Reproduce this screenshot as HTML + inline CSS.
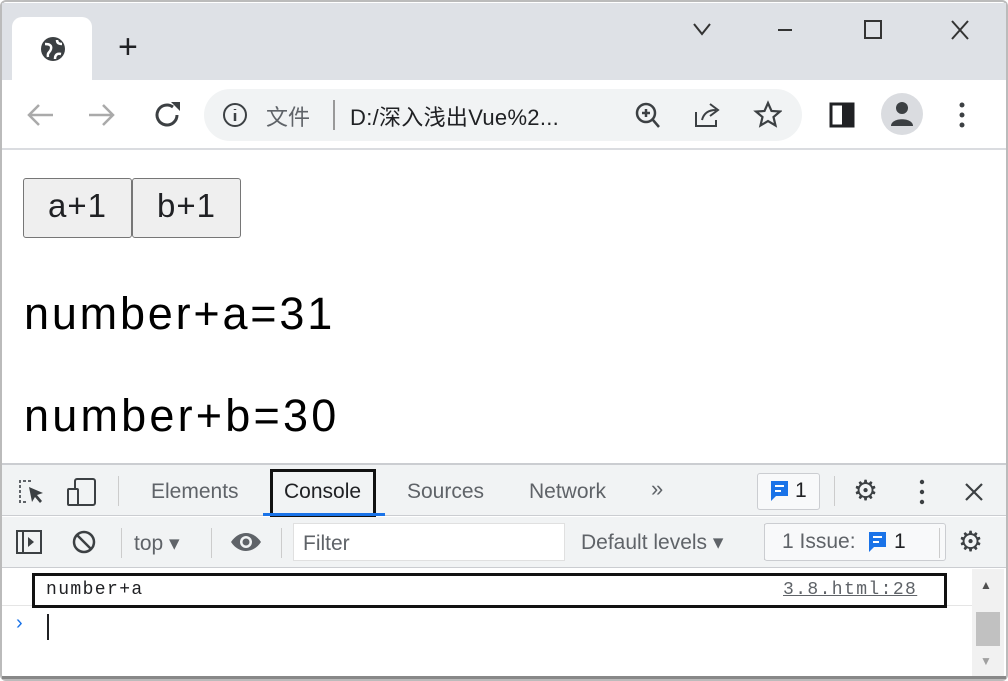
<!DOCTYPE html>
<html><head><meta charset="utf-8"><style>
*{margin:0;padding:0;box-sizing:border-box}
body{width:1008px;height:681px;background:#fff;font-family:"Liberation Sans","Noto Sans CJK SC",sans-serif;position:relative;overflow:hidden;color:#202124}
.a{position:absolute}
</style></head><body>
<div class="a" style="left:0;top:0;width:1008px;height:681px;border:2px solid #bbb;border-radius:6px"></div>
<!-- tab strip -->
<div class="a" style="left:2px;top:3px;width:1004px;height:77px;background:#dee1e6"></div>
<div class="a" style="left:12px;top:17px;width:80px;height:66px;background:#fff;border-radius:10px 10px 0 0"></div>
<svg class="a" style="left:39px;top:35px" width="28" height="28" viewBox="0 0 28 28"><circle cx="14" cy="14" r="12" fill="#3c4043"/><path d="M6 9c4 0 7 1 6 5s-4 3-3 8M16 24c0-4 2-6 6-5M18 5c0 3 2 4 5 4" stroke="#fff" stroke-width="2.5" fill="none"/></svg>
<div class="a" style="left:118px;top:28px;font-size:34px;color:#202124">+</div>
<svg class="a" style="left:690px;top:18px" width="300" height="24" viewBox="0 0 300 24"><path d="M4 6l8 10 8-10" stroke="#333" stroke-width="2" fill="none"/><path d="M88 12h14" stroke="#333" stroke-width="2"/><rect x="175" y="3" width="16" height="17" stroke="#333" stroke-width="2" fill="none"/><path d="M262 3l16 18M278 3l-16 18" stroke="#333" stroke-width="2"/></svg>
<!-- toolbar -->
<svg class="a" style="left:25px;top:98px" width="170" height="34" viewBox="0 0 170 34"><path d="M28 17H4M14 7L4 17l10 10" stroke="#aaa" stroke-width="2.5" fill="none"/><path d="M64 17h24M78 7l10 10-10 10" stroke="#aaa" stroke-width="2.5" fill="none"/><path d="M148 9a10 10 0 1 0 4 8" stroke="#3c4043" stroke-width="3" fill="none"/><path d="M146 4h9v9z" fill="#3c4043"/></svg>
<div class="a" style="left:204px;top:89px;width:598px;height:52px;background:#f1f3f4;border-radius:26px"></div>
<svg class="a" style="left:222px;top:102px" width="26" height="26"><circle cx="13" cy="13" r="11" stroke="#3c4043" stroke-width="2" fill="none"/><path d="M13 11v8M13 7v1" stroke="#3c4043" stroke-width="2.5"/></svg>
<div class="a" style="left:266px;top:100px;font-size:22px;color:#5f6368">文件</div>
<div class="a" style="left:333px;top:100px;width:2px;height:30px;background:#999"></div>
<div class="a" style="left:350px;top:100px;font-size:22px;color:#202124;letter-spacing:0.3px">D:/深入浅出Vue%2...</div>
<svg class="a" style="left:632px;top:100px" width="150" height="30" viewBox="0 0 150 30"><circle cx="14" cy="13" r="9" stroke="#3c4043" stroke-width="2.5" fill="none"/><path d="M21 20l6 7M10 13h8M14 9v8" stroke="#3c4043" stroke-width="2.5"/><path d="M64 12v14h20v-6M70 20c2-8 8-10 14-10M78 4l8 6-8 6" stroke="#3c4043" stroke-width="2" fill="none"/><path d="M136 3l3.5 8 8.5.5-6.5 5.5 2 8.5-7.5-4.5-7.5 4.5 2-8.5-6.5-5.5 8.5-.5z" stroke="#3c4043" stroke-width="2.2" fill="none"/></svg>
<svg class="a" style="left:829px;top:102px" width="26" height="26"><rect x="2" y="2" width="22" height="22" stroke="#202124" stroke-width="3" fill="none"/><rect x="13" y="2" width="11" height="22" fill="#202124"/></svg>
<div class="a" style="left:881px;top:93px;width:42px;height:42px;border-radius:50%;background:#dadce0"></div>
<svg class="a" style="left:890px;top:100px" width="24" height="28"><circle cx="12" cy="8" r="6" fill="#3c4043"/><path d="M1 26c0-9 22-9 22 0z" fill="#3c4043"/></svg>
<svg class="a" style="left:957px;top:101px" width="10" height="28"><circle cx="5" cy="4" r="2.5" fill="#3c4043"/><circle cx="5" cy="14" r="2.5" fill="#3c4043"/><circle cx="5" cy="24" r="2.5" fill="#3c4043"/></svg>
<div class="a" style="left:2px;top:148px;width:1004px;height:2px;background:#dadce0"></div>
<!-- page -->
<div class="a" style="left:23px;top:178px;width:109px;height:60px;border:1.5px solid #767676;border-radius:3px;background:#efefef;font-size:33px;text-align:center;line-height:54px;letter-spacing:1px">a+1</div>
<div class="a" style="left:132px;top:178px;width:109px;height:60px;border:1.5px solid #767676;border-radius:3px;background:#efefef;font-size:33px;text-align:center;line-height:54px;letter-spacing:1px">b+1</div>
<div class="a" style="left:24px;top:288px;font-size:45px;color:#000;letter-spacing:2.8px">number+a=31</div>
<div class="a" style="left:24px;top:390px;font-size:45px;color:#000;letter-spacing:3.2px">number+b=30</div>
<!-- devtools -->
<div class="a" style="left:2px;top:463px;width:1004px;height:2px;background:#cbcdd1"></div>
<div class="a" style="left:2px;top:465px;width:1004px;height:51px;background:#f1f3f4;border-bottom:1px solid #cbcdd1"></div>
<svg class="a" style="left:17px;top:477px" width="84" height="30"><path d="M14 4H3v21h8" stroke="#5f6368" stroke-width="2" fill="none" stroke-dasharray="3 2"/><path d="M12 10l14 6-6 2 5 6-2 2-5-6-3 5z" fill="#3c4043"/><rect x="58" y="2" width="20" height="26" rx="2" stroke="#3c4043" stroke-width="2" fill="none"/><rect x="51" y="12" width="10" height="16" rx="1" stroke="#3c4043" stroke-width="2" fill="#f1f3f4"/></svg>
<div class="a" style="left:118px;top:476px;width:1px;height:30px;background:#ccc"></div>
<div class="a" style="left:151px;top:480px;font-size:21px;color:#5f6368">Elements</div>
<div class="a" style="left:270px;top:469px;width:106px;height:48px;border:3px solid #111"></div>
<div class="a" style="left:263px;top:513px;width:122px;height:3px;background:#1a73e8"></div>
<div class="a" style="left:284px;top:480px;font-size:21px;color:#202124">Console</div>
<div class="a" style="left:407px;top:480px;font-size:21px;color:#5f6368">Sources</div>
<div class="a" style="left:529px;top:480px;font-size:21px;color:#5f6368">Network</div>
<div class="a" style="left:651px;top:476px;font-size:22px;color:#5f6368">»</div>
<div class="a" style="left:757px;top:473px;width:63px;height:37px;border:1.5px solid #cbcdd1;border-radius:3px;background:#f8f9fa"></div>
<svg class="a" style="left:770px;top:480px" width="20" height="24"><path d="M1 1h17v15H6l-5 5z" fill="#1a73e8"/><path d="M5 6h9M5 11h6" stroke="#fff" stroke-width="2"/></svg>
<div class="a" style="left:795px;top:479px;font-size:21px;color:#202124">1</div>
<div class="a" style="left:834px;top:476px;width:1px;height:30px;background:#ccc"></div>
<div class="a" style="left:853px;top:474px;font-size:28px;color:#3c4043">⚙</div>
<svg class="a" style="left:917px;top:478px" width="10" height="28"><circle cx="5" cy="4" r="2.2" fill="#3c4043"/><circle cx="5" cy="14" r="2.2" fill="#3c4043"/><circle cx="5" cy="24" r="2.2" fill="#3c4043"/></svg>
<svg class="a" style="left:963px;top:481px" width="22" height="22"><path d="M3 3l16 16M19 3L3 19" stroke="#3c4043" stroke-width="2.2"/></svg>
<!-- second bar -->
<div class="a" style="left:2px;top:517px;width:1004px;height:51px;background:#f1f3f4;border-bottom:1px solid #cbcdd1"></div>
<svg class="a" style="left:15px;top:529px" width="90" height="28"><rect x="2" y="2" width="24" height="22" stroke="#3c4043" stroke-width="2" fill="none"/><path d="M8 2v22" stroke="#3c4043" stroke-width="2"/><path d="M13 8l6 5-6 5z" fill="#3c4043"/><circle cx="69" cy="13" r="10" stroke="#3c4043" stroke-width="2.5" fill="none"/><path d="M62 6l14 14" stroke="#3c4043" stroke-width="2.5"/></svg>
<div class="a" style="left:121px;top:528px;width:1px;height:30px;background:#ccc"></div>
<div class="a" style="left:134px;top:531px;font-size:21px;color:#5f6368">top ▾</div>
<div class="a" style="left:211px;top:528px;width:1px;height:30px;background:#ccc"></div>
<svg class="a" style="left:230px;top:530px" width="32" height="24"><path d="M1 12c8-12 22-12 30 0c-8 12-22 12-30 0z" fill="#5f6368"/><circle cx="16" cy="12" r="6" fill="#f1f3f4"/><circle cx="16" cy="12" r="3.5" fill="#5f6368"/></svg>
<div class="a" style="left:281px;top:528px;width:1px;height:30px;background:#ccc"></div>
<div class="a" style="left:293px;top:523px;width:272px;height:38px;background:#fff;border:1px solid #e0e0e0"></div>
<div class="a" style="left:303px;top:532px;font-size:21px;color:#5f6368">Filter</div>
<div class="a" style="left:581px;top:530px;font-size:21px;color:#5f6368">Default levels ▾</div>
<div class="a" style="left:764px;top:524px;width:1px;height:36px;background:#ccc"></div>
<div class="a" style="left:764px;top:523px;width:182px;height:38px;border:1.5px solid #cbcdd1;border-radius:3px;background:#f8f9fa"></div>
<div class="a" style="left:782px;top:530px;font-size:21px;color:#5f6368">1 Issue:</div>
<svg class="a" style="left:868px;top:531px" width="20" height="24"><path d="M1 1h17v15H6l-5 5z" fill="#1a73e8"/><path d="M5 6h9M5 11h6" stroke="#fff" stroke-width="2"/></svg>
<div class="a" style="left:894px;top:530px;font-size:21px;color:#202124">1</div>
<div class="a" style="left:939px;top:528px;width:1px;height:30px;background:#ccc"></div>
<div class="a" style="left:958px;top:525px;font-size:28px;color:#3c4043">⚙</div>
<!-- console -->
<div class="a" style="left:2px;top:605px;width:970px;height:1px;background:#e5e5e5"></div>
<div class="a" style="left:32px;top:573px;width:915px;height:35px;border:3px solid #111;background:#fff"></div>
<div class="a" style="left:46px;top:580px;font-family:'Liberation Mono',monospace;font-size:18px;color:#202124;letter-spacing:1.4px">number+a</div>
<div class="a" style="left:783px;top:580px;font-family:'Liberation Mono',monospace;font-size:18px;color:#5f6368;text-decoration:underline;letter-spacing:1.4px">3.8.html:28</div>
<div class="a" style="left:16px;top:612px;font-size:20px;color:#1a73e8">›</div>
<div class="a" style="left:47px;top:614px;width:2px;height:26px;background:#202124"></div>
<div class="a" style="left:972px;top:569px;width:32px;height:108px;background:#f1f1f1"></div>
<div class="a" style="left:980px;top:578px;font-size:12px;color:#505050">▲</div>
<div class="a" style="left:976px;top:612px;width:24px;height:34px;background:#c1c1c1"></div>
<div class="a" style="left:980px;top:654px;font-size:12px;color:#a0a0a0">▼</div>
<div class="a" style="left:2px;top:676px;width:1004px;height:3px;background:#888"></div>
</body></html>
